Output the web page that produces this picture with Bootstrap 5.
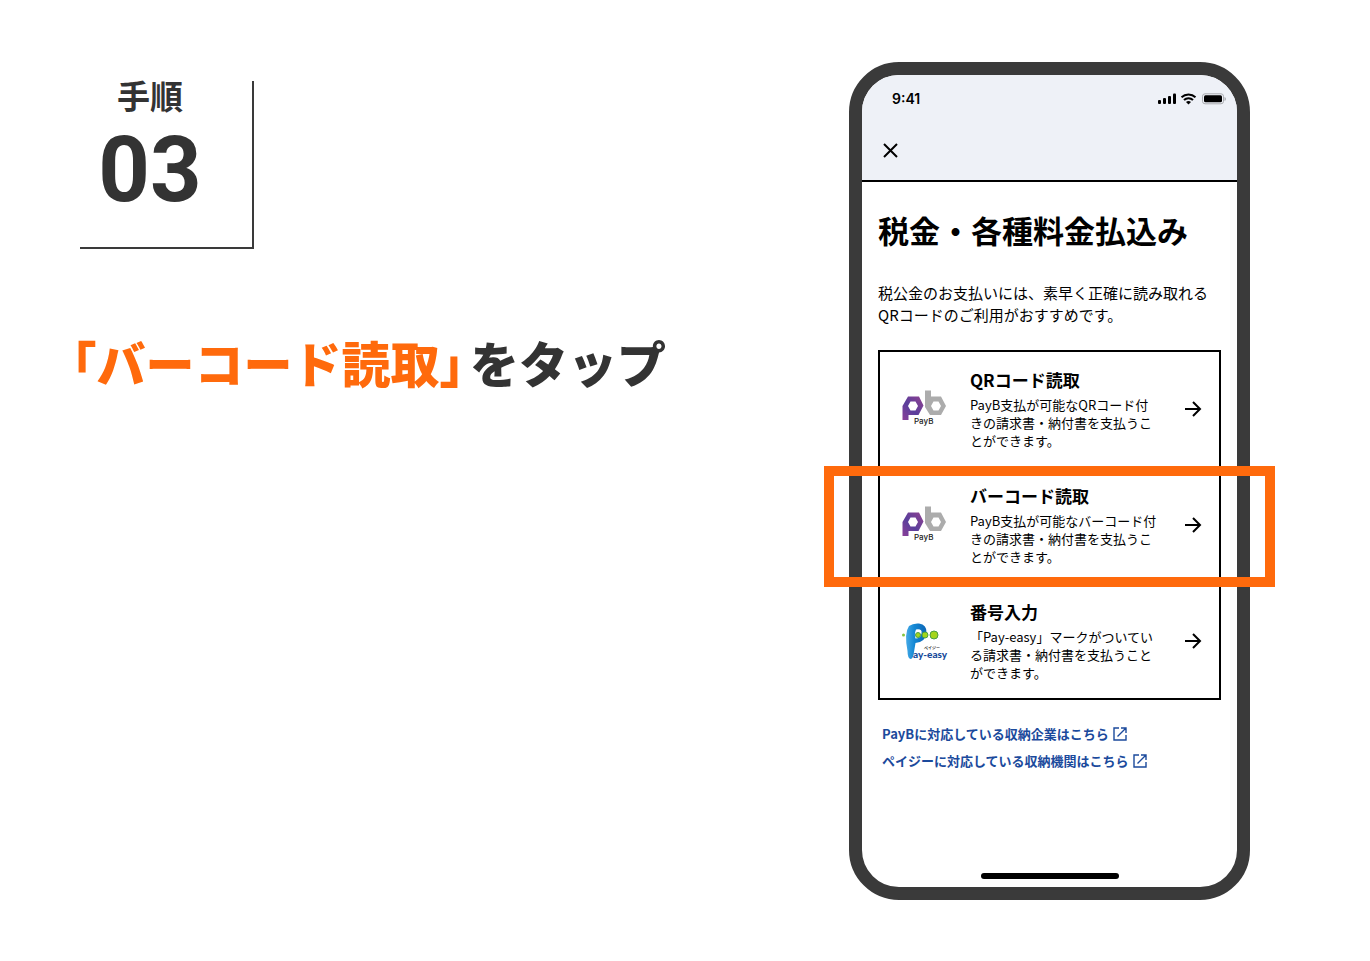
<!DOCTYPE html>
<html lang="ja">
<head>
<meta charset="utf-8">
<meta name="viewport" content="width=device-width, initial-scale=1">
<title>手順03 「バーコード読取」をタップ</title>
<link href="https://cdn.jsdelivr.net/npm/bootstrap@5.3.0/dist/css/bootstrap.min.css" rel="stylesheet">
<style>
  body { font-family: "Noto Sans CJK JP", sans-serif; color: #333; background: #fff; }
  .guide { padding: 62px 120px 61px 72px; }
  .step-box { width: 174px; margin: 17px 0 0 8px; padding: 0 32px 24px 0; border-right: 2px solid #3a3a3a; border-bottom: 2px solid #3a3a3a; }
  .step-frame { margin-top: 19px; }
  .step-label { font-size: 33px; line-height: 28px; font-weight: 700; }
  .step-number { font-family: Roboto, sans-serif; font-size: 90px; line-height: 104px; margin-top: 10px; font-weight: 700; }
  .step-title { margin-top: 77px; font-size: 49px; line-height: 72px; font-weight: 900; }
  .step-title em { font-style: normal; color: #ff6a0c; margin-right: 6px; }
  .half { font-feature-settings: "halt"; }

  .phone { width: 401px; max-width: 100%; border: 13px solid #3a3a3a; border-radius: 50px; color: #000; }
  .phone-head { background: #eef1f7; border-bottom: 2px solid #000; border-radius: 37px 37px 0 0; }
  .status { padding: 14px 11px 0 30px; font-family: Inter, sans-serif; font-size: 14px; line-height: 20px; font-weight: 600; }
  .close-btn { margin: 29px 0 17px 16px; width: 25px; height: 25px; }
  .phone-body { padding: 24px 16px 8px; }
  .screen-title { font-size: 31px; line-height: 48px; font-weight: 700; }
  .lead-text { margin: 28px 0 24px; font-size: 15px; line-height: 22px; }
  .menu { border: 2px solid #000; }
  .menu-item { color: #000; padding: 16px 17px 16px 22px; border-bottom: 2px solid #000; text-decoration: none; }
  .menu-item:last-child { border-bottom: 0; }
  .menu-name { font-size: 17px; line-height: 24px; font-weight: 700; }
  .menu-text { margin-top: 4px; font-size: 13px; line-height: 18px; white-space: nowrap; }
  .menu-logo { width: 46px; margin-right: 22px; }
  .highlight { inset: -2px -56px -5px; border: 10px solid #ff6a0c; pointer-events: none; z-index: 2; }
  .links { margin: 20px 0 0 4px; font-size: 13px; line-height: 27px; font-weight: 700; }
  .links a { color: #1b4a9c; text-decoration: none; }
  .home-bar { width: 138px; height: 6px; border-radius: 3px; background: #000; margin: 99px auto 0; }
</style>
</head>
<body>
<main class="guide d-flex flex-wrap justify-content-between align-items-start">
  <section>
    <div class="step-box step-frame text-center">
      <div class="step-label">手順</div>
      <div class="step-number">03</div>
    </div>
    <h1 class="step-title mb-0"><em><span class="half">「</span>バーコード読取<span class="half">」</span></em>をタップ</h1>
  </section>

  <section class="phone">
    <header class="phone-head">
      <div class="status d-flex justify-content-between align-items-center">
        <span>9:41</span>
        <svg width="68" height="12" viewBox="0 0 68 12" aria-hidden="true">
          <rect x="0" y="7" width="3" height="4" rx="1"/><rect x="5" y="5" width="3" height="6" rx="1"/><rect x="10" y="3" width="3" height="8" rx="1"/><rect x="15" y="0.500" width="3" height="10.500" rx="1"/>
          <path d="M23.500 4.200a10.200 10.200 0 0 1 14 0M26 7a6.400 6.400 0 0 1 9 0" fill="none" stroke="#000" stroke-width="2"/>
          <path d="M28 9q2.500-2 5 0l-2.500 2.500z"/>
          <rect x="44.500" y="0.800" width="21" height="10" rx="2.500" fill="none" stroke="#aaacb0"/>
          <rect x="46" y="2.300" width="18" height="7" rx="1.500"/>
          <path d="M66.500 4v4q1.500-.6 1.500-2t-1.500-2z" fill="#aaacb0"/>
        </svg>
      </div>
      <button class="close-btn btn p-0 border-0 d-flex align-items-center justify-content-center" type="button" aria-label="閉じる">
        <svg width="15" height="15" viewBox="0 0 15 15"><path d="M1 1l13 13M14 1L1 14" stroke="#000" stroke-width="2"/></svg>
      </button>
    </header>

    <div class="phone-body">
      <h2 class="screen-title mb-0">税金・各種料金払込み</h2>
      <p class="lead-text">税公金のお支払いには、素早く正確に読み取れる<br>QRコードのご利用がおすすめです。</p>

      <nav class="menu">
        <a class="menu-item d-flex align-items-center" href="#qr">
          <svg class="menu-logo flex-shrink-0" height="38" viewBox="0 0 46 38" aria-hidden="true">
            <defs><linearGradient id="violet" x1="0" y1="1" x2="1" y2="0"><stop offset="0" stop-color="#8b3f98"/><stop offset=".45" stop-color="#5a3f9c"/><stop offset="1" stop-color="#91408f"/></linearGradient></defs>
            <g id="payb">
              <path fill="url(#violet)" fill-rule="evenodd" d="M6 6.500h11l4.500 9-5 9.500H6.500v5H.500V16zM8.500 11.500L6 16l2.500 4.500h5l2.500-4.500-2.500-4.500z"/>
              <path fill="#acacac" fill-rule="evenodd" d="M23 .5h6v6h10l5 9.500-5 9H28l-5-8zM31.500 11.500L29 16l2.500 4.500h5l2.500-4.500-2.500-4.500z"/>
              <text x="12" y="34" font-size="8" font-weight="500" font-family="Inter" fill="#222">PayB</text>
            </g>
          </svg>
          <div class="flex-grow-1">
            <div class="menu-name">QRコード読取</div>
            <div class="menu-text">PayB支払が可能なQRコード付<br>きの請求書・納付書を支払うこ<br>とができます。</div>
          </div>
          <svg class="flex-shrink-0" width="18" height="18" viewBox="0 0 18 18" aria-hidden="true"><path d="M1 9h15M9 2l7 7-7 7" fill="none" stroke="#000" stroke-width="2"/></svg>
        </a>
        <a class="menu-item d-flex align-items-center position-relative" href="#barcode">
          <svg class="menu-logo flex-shrink-0" height="38" viewBox="0 0 46 38" aria-hidden="true"><use href="#payb"/></svg>
          <div class="flex-grow-1">
            <div class="menu-name">バーコード読取</div>
            <div class="menu-text">PayB支払が可能なバーコード付<br>きの請求書・納付書を支払うこ<br>とができます。</div>
          </div>
          <svg class="flex-shrink-0" width="18" height="18" viewBox="0 0 18 18" aria-hidden="true"><path d="M1 9h15M9 2l7 7-7 7" fill="none" stroke="#000" stroke-width="2"/></svg>
          <span class="highlight position-absolute"></span>
        </a>
        <a class="menu-item d-flex align-items-center" href="#number">
          <svg class="menu-logo flex-shrink-0" height="38" viewBox="0 0 46 38" aria-hidden="true">
            <defs><linearGradient id="blue" x1="0" x2="1"><stop offset="0" stop-color="#45a9e6"/><stop offset=".4" stop-color="#1488d4"/><stop offset="1" stop-color="#0b64b5"/></linearGradient></defs>
            <path fill="url(#blue)" fill-rule="evenodd" d="M7 4Q11 1 17 1.500q8 1 7.500 9.500-1 9-11 10l-2 12q-1 4-3 4-3-1-3-8Q2 11 7 4zM14 7.500q-2 5-.5 9 5 0 6-5 1-5-5.500-4z"/>
            <circle cx="1.500" cy="13" r="1.500" fill="#86c440"/>
            <g fill="#a4d51c" stroke="#4a9f45"><circle cx="16" cy="13" r="2.500"/><circle cx="23" cy="13" r="3"/><circle cx="32" cy="13" r="4"/></g>
            <text x="22" y="28" font-size="4" font-weight="700" fill="#333">ペイジー</text>
            <text x="11" y="36" font-size="10" font-weight="900" font-family="Lato" fill="#174b9b">ay-easy</text>
          </svg>
          <div class="flex-grow-1">
            <div class="menu-name">番号入力</div>
            <div class="menu-text">「Pay-easy」マークがついてい<br>る請求書・納付書を支払うこと<br>ができます。</div>
          </div>
          <svg class="flex-shrink-0" width="18" height="18" viewBox="0 0 18 18" aria-hidden="true"><path d="M1 9h15M9 2l7 7-7 7" fill="none" stroke="#000" stroke-width="2"/></svg>
        </a>
      </nav>

      <div class="links d-flex flex-column align-items-start">
        <a class="d-flex align-items-center gap-1" href="#payb-list">PayBに対応している収納企業はこちら
          <svg width="14" height="14" viewBox="0 0 14 14" aria-hidden="true"><path d="M6 1H1v12h12V8M8 1h5v5M13 1L4.500 9.500" fill="none" stroke="#1b4a9c" stroke-width="1.400"/></svg></a>
        <a class="d-flex align-items-center gap-1" href="#payeasy-list">ペイジーに対応している収納機関はこちら
          <svg width="14" height="14" viewBox="0 0 14 14" aria-hidden="true"><path d="M6 1H1v12h12V8M8 1h5v5M13 1L4.500 9.500" fill="none" stroke="#1b4a9c" stroke-width="1.400"/></svg></a>
      </div>
      <div class="home-bar"></div>
    </div>
  </section>
</main>
<script src="https://cdn.jsdelivr.net/npm/bootstrap@5.3.0/dist/js/bootstrap.bundle.min.js"></script>
</body>
</html>
